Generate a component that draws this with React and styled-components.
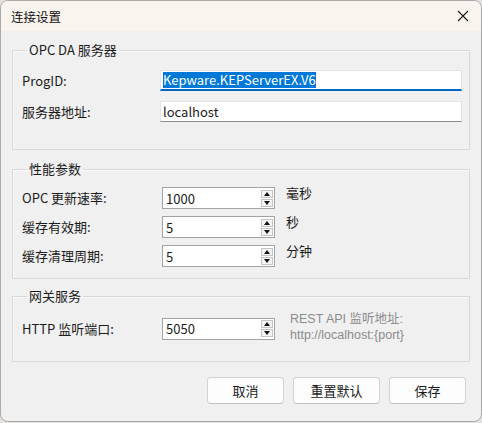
import React from 'react'
import styled, { createGlobalStyle } from 'styled-components'

const Global = createGlobalStyle`
html, body {
  margin: 0;
  background: #e4e1de;
}
* { box-sizing: border-box; }
body {
  font-family: "Noto Sans CJK SC", "Noto Sans", "Liberation Sans", sans-serif;
  font-size: 13px;
  color: #1b1b1b;
}
`

const Window = styled.div`
width: 482px;
height: 422px;
display: flex;
flex-direction: column;
background: #f0f0f0;
border: 1px solid #a9a9a9;
border-radius: 8px;
overflow: hidden;
`

const TitleBar = styled.div`
height: 30px;
flex: none;
display: flex;
align-items: center;
justify-content: space-between;
padding: 0 8px 0 10px;
background: #faf4ee;
font-size: 12.5px;
color: #111;
`

const CloseButton = styled.div`
width: 20px;
height: 20px;
display: flex;
align-items: center;
justify-content: center;
`

const Body = styled.div`
flex: 1;
display: flex;
flex-direction: column;
padding: 10px 11px 0;
`

const Group = styled.fieldset`
margin: ${({ mt }) => mt || 0}px 0 0;
padding: ${({ pad }) => pad};
border: 1px solid #d9d9d9;
box-shadow: inset 1px 1px 0 #f8f8f8;
min-width: 0;
display: grid;
grid-template-columns: ${({ cols }) => cols};
align-items: center;
row-gap: ${({ gap }) => gap}px;
`

const Legend = styled.legend`
margin-left: 5px;
padding: 0 2px;
line-height: 18px;
font-size: 13px;
color: #1b1b1b;
`

const Label = styled.div`
line-height: 18px;
white-space: nowrap;
`

const TextBox = styled.div`
height: 21px;
display: flex;
align-items: center;
padding-left: 2px;
background: #fff;
border: 1px solid #e3e3e3;
border-bottom: ${({ focused }) => (focused ? '2px solid #0067c0' : '1px solid #8c8c8c')};
font-size: 13px;
`

const Selected = styled.span`
background: #0078d7;
color: #fff;
line-height: 16px;
`

const SpinWrap = styled.div`
width: 113px;
height: 22px;
display: flex;
align-items: center;
justify-content: space-between;
background: #fff;
border: 1px solid #a3a3a3;
padding: 0 1px 0 3px;
font-size: 13px;
`

const SpinButtons = styled.div`
display: flex;
flex-direction: column;
gap: 1px;
`

const SpinButton = styled.div`
width: 12px;
height: 8px;
display: flex;
align-items: center;
justify-content: center;
background: #f4f4f4;
border: 1px solid #c4c4c4;
`

const Unit = styled.div`
align-self: start;
margin: -3px 0 0 11px;
line-height: 18px;
`

const Hint = styled.div`
align-self: start;
margin: -3px 0 0 15px;
display: flex;
flex-direction: column;
color: #8c8c8c;
font-family: "Liberation Sans", "Noto Sans CJK SC", sans-serif;
line-height: 16px;
font-size: 12.5px;
white-space: nowrap;
`

const ButtonRow = styled.div`
display: flex;
justify-content: flex-end;
gap: 9px;
margin: 15px 4px 0 0;
`

const Button = styled.button`
width: ${({ w }) => w}px;
height: 27px;
background: #fdfdfd;
border: 1px solid #d2d2d2;
border-bottom-color: #c0c0c0;
border-radius: 4px;
font-family: inherit;
font-size: 13px;
color: #1b1b1b;
padding: 0;
`

const Arrow = ({ down }) => (
  <svg width="6" height="4" viewBox="0 0 6 4">
    <path d={down ? 'M0 0 H6 L3 4 Z' : 'M0 4 H6 L3 0 Z'} fill="#111" />
  </svg>
)

const Spin = ({ value }) => (
  <SpinWrap>
    <span>{value}</span>
    <SpinButtons>
      <SpinButton><Arrow /></SpinButton>
      <SpinButton><Arrow down /></SpinButton>
    </SpinButtons>
  </SpinWrap>
)

export default function App() {
  return (
    <>
      <Global />
      <Window>
        <TitleBar>
          <span>连接设置</span>
          <CloseButton>
            <svg width="12" height="12" viewBox="0 0 12 12">
              <path d="M1 1 L11 11 M11 1 L1 11" stroke="#1a1a1a" strokeWidth="1.1" />
            </svg>
          </CloseButton>
        </TitleBar>
        <Body>
          <Group pad="11px 7px 27px 9px" cols="138px 1fr" gap={10}>
            <Legend>OPC DA 服务器</Legend>
            <Label>ProgID:</Label>
            <TextBox focused>
              <Selected>Kepware.KEPServerEX.V6</Selected>
            </TextBox>
            <Label>服务器地址:</Label>
            <TextBox>localhost</TextBox>
          </Group>

          <Group mt={10} pad="9px 7px 11px 9px" cols="140px 113px 1fr" gap={7}>
            <Legend>性能参数</Legend>
            <Label>OPC 更新速率:</Label>
            <Spin value="1000" />
            <Unit>毫秒</Unit>
            <Label>缓存有效期:</Label>
            <Spin value="5" />
            <Unit>秒</Unit>
            <Label>缓存清理周期:</Label>
            <Spin value="5" />
            <Unit>分钟</Unit>
          </Group>

          <Group mt={8} pad="9px 7px 18px 9px" cols="140px 113px 1fr" gap={0}>
            <Legend>网关服务</Legend>
            <Label>HTTP 监听端口:</Label>
            <Spin value="5050" />
            <Hint>
              <span>REST API 监听地址:</span>
              <span>http://localhost:{'{port}'}</span>
            </Hint>
          </Group>

          <ButtonRow>
            <Button w={77}>取消</Button>
            <Button w={87}>重置默认</Button>
            <Button w={77}>保存</Button>
          </ButtonRow>
        </Body>
      </Window>
    </>
  )
}
